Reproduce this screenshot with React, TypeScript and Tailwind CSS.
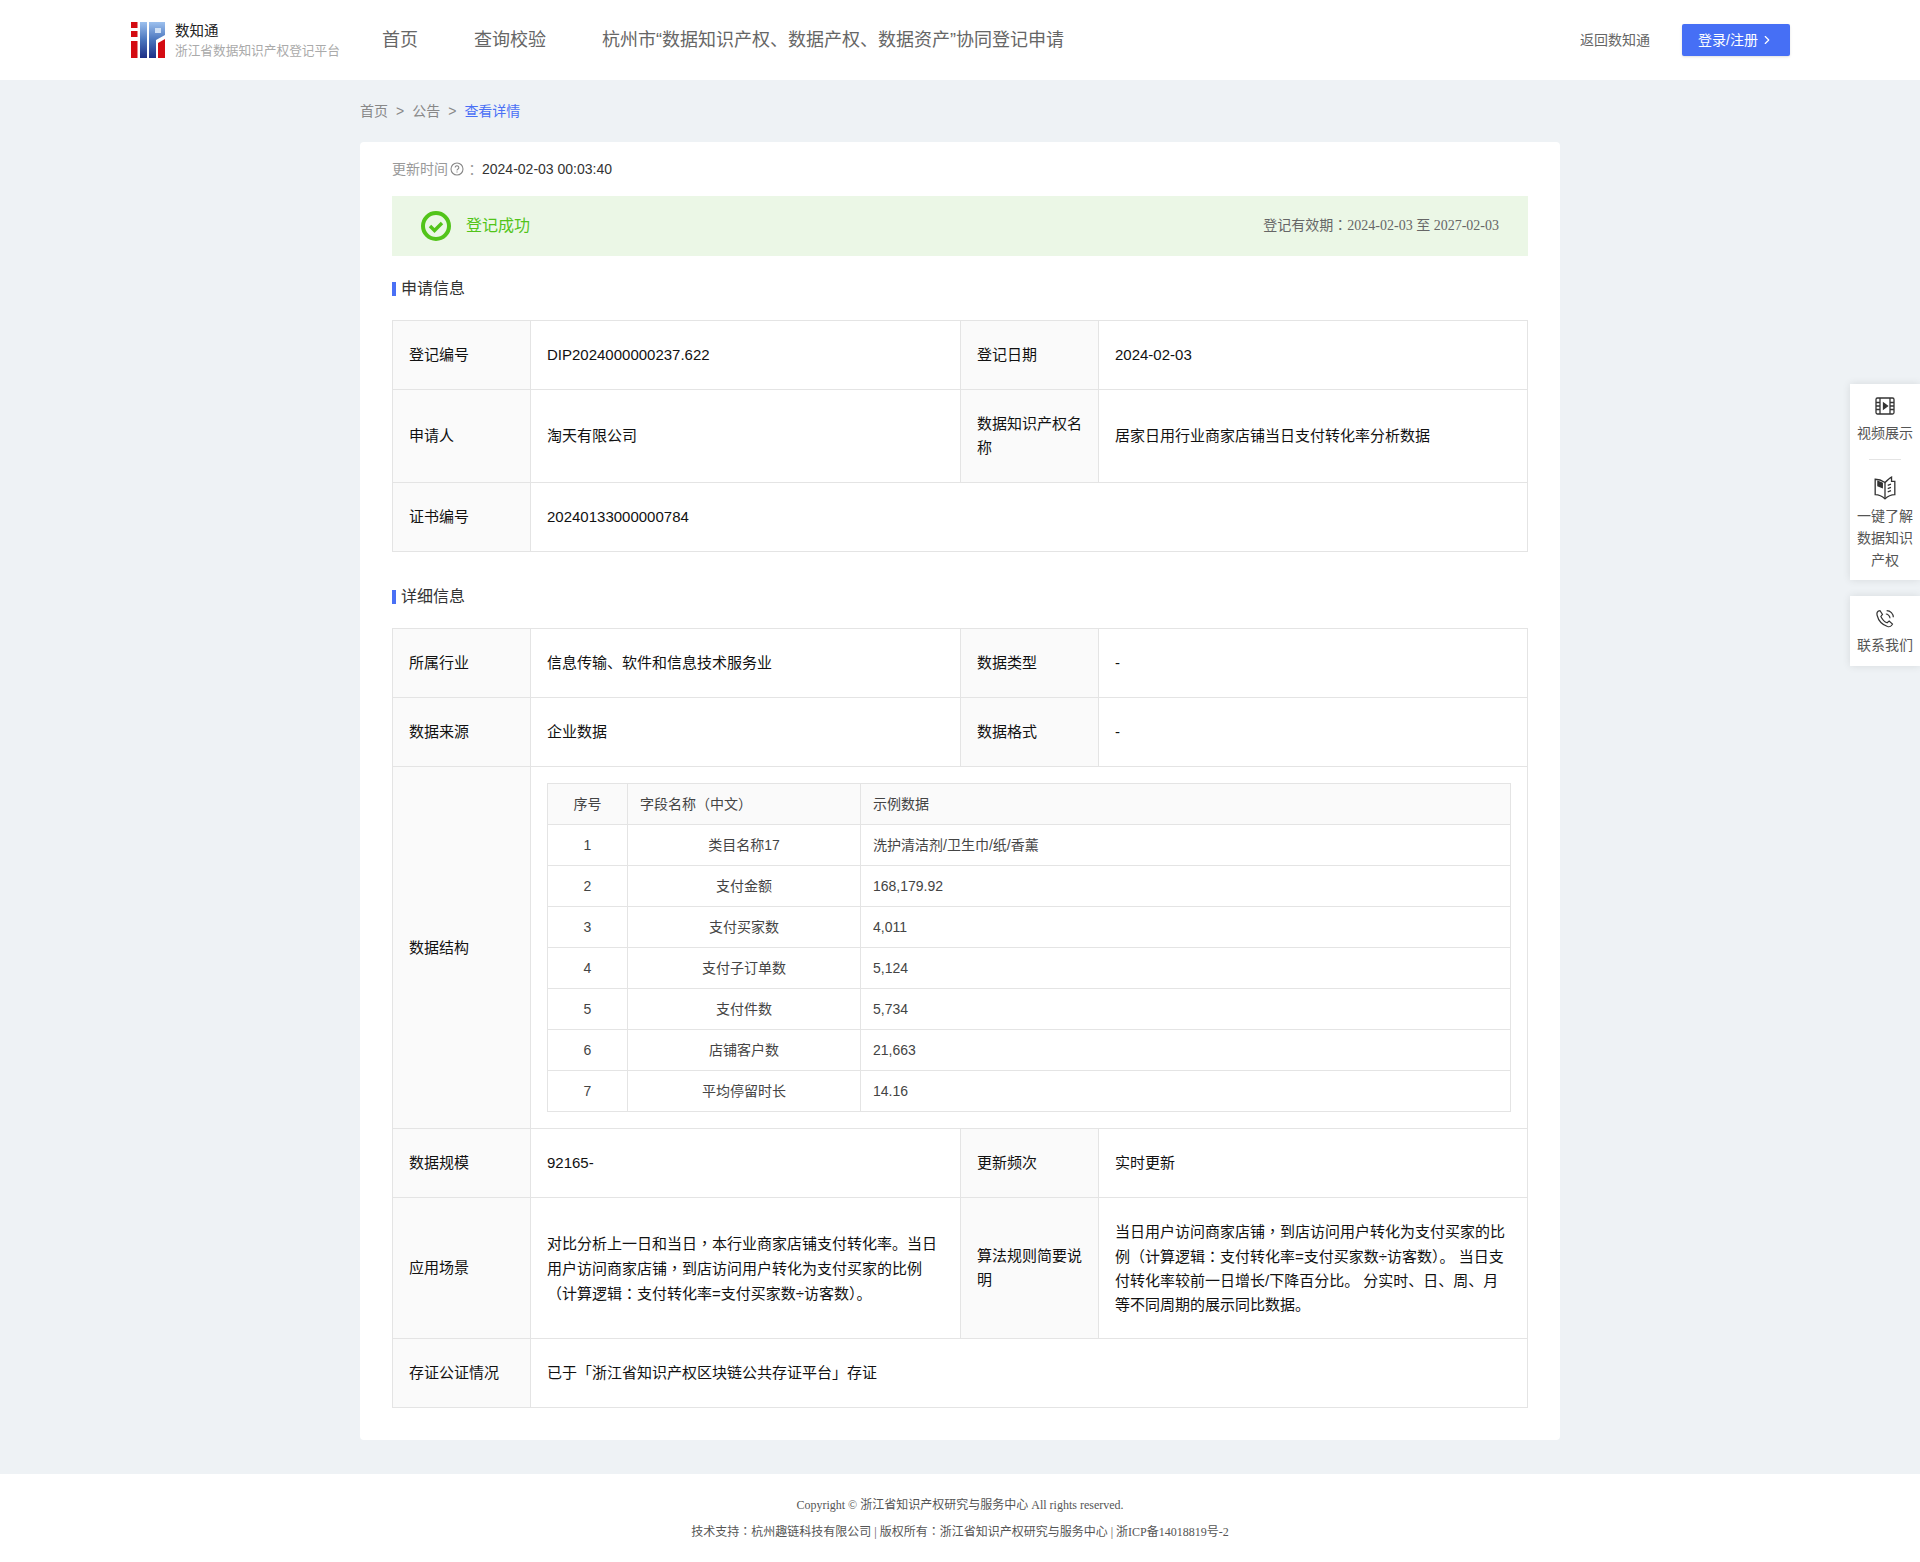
import { ChevronRight } from "lucide-react";

const fieldRows = [
  ["1", "类目名称17", "洗护清洁剂/卫生巾/纸/香薰"],
  ["2", "支付金额", "168,179.92"],
  ["3", "支付买家数", "4,011"],
  ["4", "支付子订单数", "5,124"],
  ["5", "支付件数", "5,734"],
  ["6", "店铺客户数", "21,663"],
  ["7", "平均停留时长", "14.16"],
];

const sceneLines = [
  "对比分析上一日和当日，本行业商家店铺支付转化率。当日",
  "用户访问商家店铺，到店访问用户转化为支付买家的比例",
  "（计算逻辑：支付转化率=支付买家数÷访客数）。",
];

const ruleLines = [
  "当日用户访问商家店铺，到店访问用户转化为支付买家的比",
  "例（计算逻辑：支付转化率=支付买家数÷访客数）。 当日支",
  "付转化率较前一日增长/下降百分比。 分实时、日、周、月",
  "等不同周期的展示同比数据。",
];

const sans = "font-['Liberation_Sans','Noto_Sans_CJK_SC',sans-serif]";
const serif = "font-['Liberation_Serif','Noto_Sans_CJK_SC',serif]";

// The comma and colon sit centred in the original, as they do in the TC cut
function marks(text: string) {
  return text.split(/([，：])/).map((part, i) =>
    part === "，" || part === "：" ? (
      <span key={i} className="font-['Noto_Sans_CJK_TC',sans-serif]">
        {part}
      </span>
    ) : (
      part
    ),
  );
}

function Logo() {
  return (
    <svg width="34" height="36" viewBox="0 0 34 36" className="shrink-0">
      <defs>
        <linearGradient id="blueBar" x1="0" y1="0" x2="0" y2="1">
          <stop offset="0" stopColor="#9cc0ee" />
          <stop offset="0.5" stopColor="#4a75bd" />
          <stop offset="1" stopColor="#1d2f86" />
        </linearGradient>
      </defs>
      <path d="M0 0h6.500v6H0zM0 9h6.500v6H0zM0 19h6.500v17H0z" fill="#d40b12" />
      <path d="M27 36V21l7-4v19z" fill="#d40b12" />
      <path d="M9 0h7v36H9z" fill="url(#blueBar)" />
      <path d="M18 0h16v13l-9 5v18h-7z" fill="url(#blueBar)" />
      <path d="M24 6h6v5h-6z" fill="#cfe0f5" />
    </svg>
  );
}

function Cell({ children, span }: { children: React.ReactNode; span?: number }) {
  return (
    <td colSpan={span} className="border border-[#e4e4e4] px-4 py-[14px] text-[15px] leading-[24px] text-[#111] align-middle">
      {typeof children === "string" ? marks(children) : children}
    </td>
  );
}

function LinesCell({ lines }: { lines: string[] }) {
  return (
    <td className="border border-[#e4e4e4] px-4 py-[21px] text-[15px] leading-[24px] text-[#111] align-middle">
      {lines.map((line) => (
        <div key={line} className="whitespace-nowrap">
          {marks(line)}
        </div>
      ))}
    </td>
  );
}

function Label({ children }: { children: React.ReactNode }) {
  return (
    <td className="border border-[#e4e4e4] bg-[#fafafa] px-4 py-[14px] text-[15px] leading-[24px] text-[#111] align-middle">
      {children}
    </td>
  );
}

function Heading({ children }: { children: React.ReactNode }) {
  return (
    <div className="flex items-center gap-[5px] text-[16px] leading-[24px] text-[#333]">
      <span className="h-[14px] w-[4px] bg-[#4a70f5]" />
      {children}
    </div>
  );
}

function Columns() {
  return (
    <colgroup>
      <col className="w-[138px]" />
      <col className="w-[430px]" />
      <col className="w-[138px]" />
      <col />
    </colgroup>
  );
}

function FieldTable() {
  return (
    <table className="w-full table-fixed border-collapse text-[14px] text-[#444]">
      <colgroup>
        <col className="w-[80px]" />
        <col className="w-[233px]" />
        <col />
      </colgroup>
      <thead>
        <tr className="h-[41px] bg-[#fafafa]">
          <th className="border border-[#e4e4e4] text-center font-normal">序号</th>
          <th className="border border-[#e4e4e4] px-3 text-left font-normal">字段名称（中文）</th>
          <th className="border border-[#e4e4e4] px-3 text-left font-normal">示例数据</th>
        </tr>
      </thead>
      <tbody>
        {fieldRows.map((row) => (
          <tr key={row[0]} className="h-[41px]">
            <td className="border border-[#e4e4e4] text-center">{row[0]}</td>
            <td className="border border-[#e4e4e4] text-center">{row[1]}</td>
            <td className="border border-[#e4e4e4] px-3">{row[2]}</td>
          </tr>
        ))}
      </tbody>
    </table>
  );
}

export default function App() {
  return (
    <div className={`${sans} relative flex min-h-[1562px] flex-col bg-[#eef2f5]`}>
      <header className="flex h-[80px] items-center bg-white pl-[131px] pr-[130px]">
        <div className="flex w-[251px] items-center gap-[10px]">
          <Logo />
          <div className="pt-[2px]">
            <div className="text-[14.500px] leading-[20px] text-[#222]">数知通</div>
            <div className="whitespace-nowrap text-[12.700px] leading-[20px] text-[#aaa]">浙江省数据知识产权登记平台</div>
          </div>
        </div>
        <nav className="flex gap-[56px] text-[18px] text-[#666]">
          <span>首页</span>
          <span>查询校验</span>
          <span>杭州市“数据知识产权、数据产权、数据资产”协同登记申请</span>
        </nav>
        <div className="ml-auto flex items-center gap-[32px]">
          <span className="text-[14px] text-[#666]">返回数知通</span>
          <button className="flex h-[32px] w-[108px] items-center justify-center gap-[2px] rounded-[2px] bg-[#466ff5] text-[14px] text-white shadow-sm">
            登录/注册
            <ChevronRight size={14} />
          </button>
        </div>
      </header>

      <main className="mx-auto w-[1200px]">
        <div className="flex h-[62px] items-center gap-[8px] text-[14px] text-[#888]">
          <span>首页</span>
          <span>&gt;</span>
          <span>公告</span>
          <span>&gt;</span>
          <span className="text-[#4a70f5]">查看详情</span>
        </div>

        <div className="rounded-[4px] bg-white px-[32px] pb-[32px]">
          <div className="flex h-[54px] items-center text-[14px] text-[#999]">
            更新时间
            <svg width="14" height="14" viewBox="0 0 14 14" fill="none" stroke="#888" strokeWidth="1.100" className="ml-[2px]">
              <circle cx="7" cy="7" r="6" />
              <path d="M5.200 5.500a1.800 1.800 0 1 1 2.800 1.500c-.6.400-1 .7-1 1.400" />
              <path d="M7 9.600v1" />
            </svg>
            <span className="ml-[1px] w-[17px] font-['Noto_Sans_CJK_TC',sans-serif]">：</span>
            <span className="text-[#333]">2024-02-03 00:03:40</span>
          </div>

          <div className="flex h-[60px] items-center justify-between bg-[#ebf7e6] px-[29px]">
            <div className="flex items-center gap-[15px] text-[16px] text-[#52c41a]">
              <svg width="30" height="30" viewBox="0 0 30 30" fill="none" stroke="#52c41a">
                <circle cx="15" cy="15" r="13" strokeWidth="4" />
                <path d="M9 15l4.500 4.500 7.500-7.500" strokeWidth="3.400" />
              </svg>
              登记成功
            </div>
            <div className={`${serif} mb-[2px] text-[14px] text-[#666]`}>{marks("登记有效期：2024-02-03 至 2027-02-03")}</div>
          </div>

          <div className="mb-[19px] mt-[21px]">
            <Heading>申请信息</Heading>
          </div>
          <table className="w-full table-fixed border-collapse">
            <Columns />
            <tbody>
              <tr className="h-[69px]">
                <Label>登记编号</Label>
                <Cell>DIP2024000000237.622</Cell>
                <Label>登记日期</Label>
                <Cell>2024-02-03</Cell>
              </tr>
              <tr className="h-[93px]">
                <Label>申请人</Label>
                <Cell>淘天有限公司</Cell>
                <Label>数据知识产权名称</Label>
                <Cell>居家日用行业商家店铺当日支付转化率分析数据</Cell>
              </tr>
              <tr className="h-[69px]">
                <Label>证书编号</Label>
                <Cell span={3}>20240133000000784</Cell>
              </tr>
            </tbody>
          </table>

          <div className="mb-[19px] mt-[33px]">
            <Heading>详细信息</Heading>
          </div>
          <table className="w-full table-fixed border-collapse">
            <Columns />
            <tbody>
              <tr className="h-[69px]">
                <Label>所属行业</Label>
                <Cell>信息传输、软件和信息技术服务业</Cell>
                <Label>数据类型</Label>
                <Cell>-</Cell>
              </tr>
              <tr className="h-[69px]">
                <Label>数据来源</Label>
                <Cell>企业数据</Cell>
                <Label>数据格式</Label>
                <Cell>-</Cell>
              </tr>
              <tr>
                <Label>数据结构</Label>
                <td colSpan={3} className="border border-[#e4e4e4] px-4 py-[16px]">
                  <FieldTable />
                </td>
              </tr>
              <tr className="h-[69px]">
                <Label>数据规模</Label>
                <Cell>92165-</Cell>
                <Label>更新频次</Label>
                <Cell>实时更新</Cell>
              </tr>
              <tr>
                <Label>应用场景</Label>
                <LinesCell lines={sceneLines} />
                <Label>算法规则简要说明</Label>
                <LinesCell lines={ruleLines} />
              </tr>
              <tr className="h-[69px]">
                <Label>存证公证情况</Label>
                <Cell span={3}>已于「浙江省知识产权区块链公共存证平台」存证</Cell>
              </tr>
            </tbody>
          </table>
        </div>
      </main>

      <footer className={`${serif} mt-[34px] grow bg-white pt-[18px] text-center text-[12px] leading-[26px] text-[#555]`}>
        <div>Copyright © 浙江省知识产权研究与服务中心 All rights reserved.</div>
        <div>{marks("技术支持：杭州趣链科技有限公司 | 版权所有：浙江省知识产权研究与服务中心 | 浙ICP备14018819号-2")}</div>
      </footer>

      <aside className="absolute right-0 top-[384px] w-[70px] text-center text-[14px] leading-[22px] text-[#555]">
        <div className="bg-white pb-[9px] pt-[12px] shadow-[0_0_8px_rgba(0,0,0,0.1)]">
          <svg width="20" height="20" viewBox="0 0 20 20" fill="none" stroke="#333" strokeWidth="1.300" className="mx-auto">
            <rect x="1" y="2" width="18" height="16" rx="1.500" />
            <path d="M5 2v16M15 2v16M1 6.500h4M1 10h4M1 13.500h4M15 6.500h4M15 10h4M15 13.500h4" />
            <path d="M8.500 7l4 3-4 3z" fill="#333" />
          </svg>
          <div className="mt-[6px]">视频展示</div>
          <div className="mx-auto mb-[16px] mt-[15px] h-px w-[32px] bg-[#e4e4e4]" />
          <svg width="22" height="24" viewBox="0 0 20 22" fill="none" stroke="#333" strokeWidth="1.200" className="mx-auto">
            <path d="M1 3c3 0 6 1 9 3 2-2 4-4 6-5v4h3v12c-3 0-6 1-9 4-3-3-6-4-9-4z" />
            <path d="M10 6v15M12.500 8.500l3-1M12.500 11.500l3-1M12.500 14.500l3-1" />
            <path d="M3.500 5l4 1.500v4l-4-1.500z" fill="#333" />
          </svg>
          <div className="mt-[5px]">
            一键了解
            <br />
            数据知识
            <br />
            产权
          </div>
        </div>
        <div className="mt-[16px] bg-white pb-[10px] pt-[13px] shadow-[0_0_8px_rgba(0,0,0,0.1)]">
          <svg width="20" height="20" viewBox="0 0 24 24" fill="none" stroke="#333" strokeWidth="1.400" className="mx-auto">
            <path d="M4 2.500c-1.500 1-2 3-1.500 5 1.500 6 6.500 11.500 12.500 13.500 2 .6 4 0 5-1.500l1-1.500-4-3.500-2.500 2c-3-1-6-4.500-7.500-7.500l2-2.500L6 2z" />
            <path d="M13 6c2.500 0 5 2.500 5 5M14 2c4.500 0 8 3.500 8 8" />
          </svg>
          <div className="mt-[5px]">联系我们</div>
        </div>
      </aside>
    </div>
  );
}
